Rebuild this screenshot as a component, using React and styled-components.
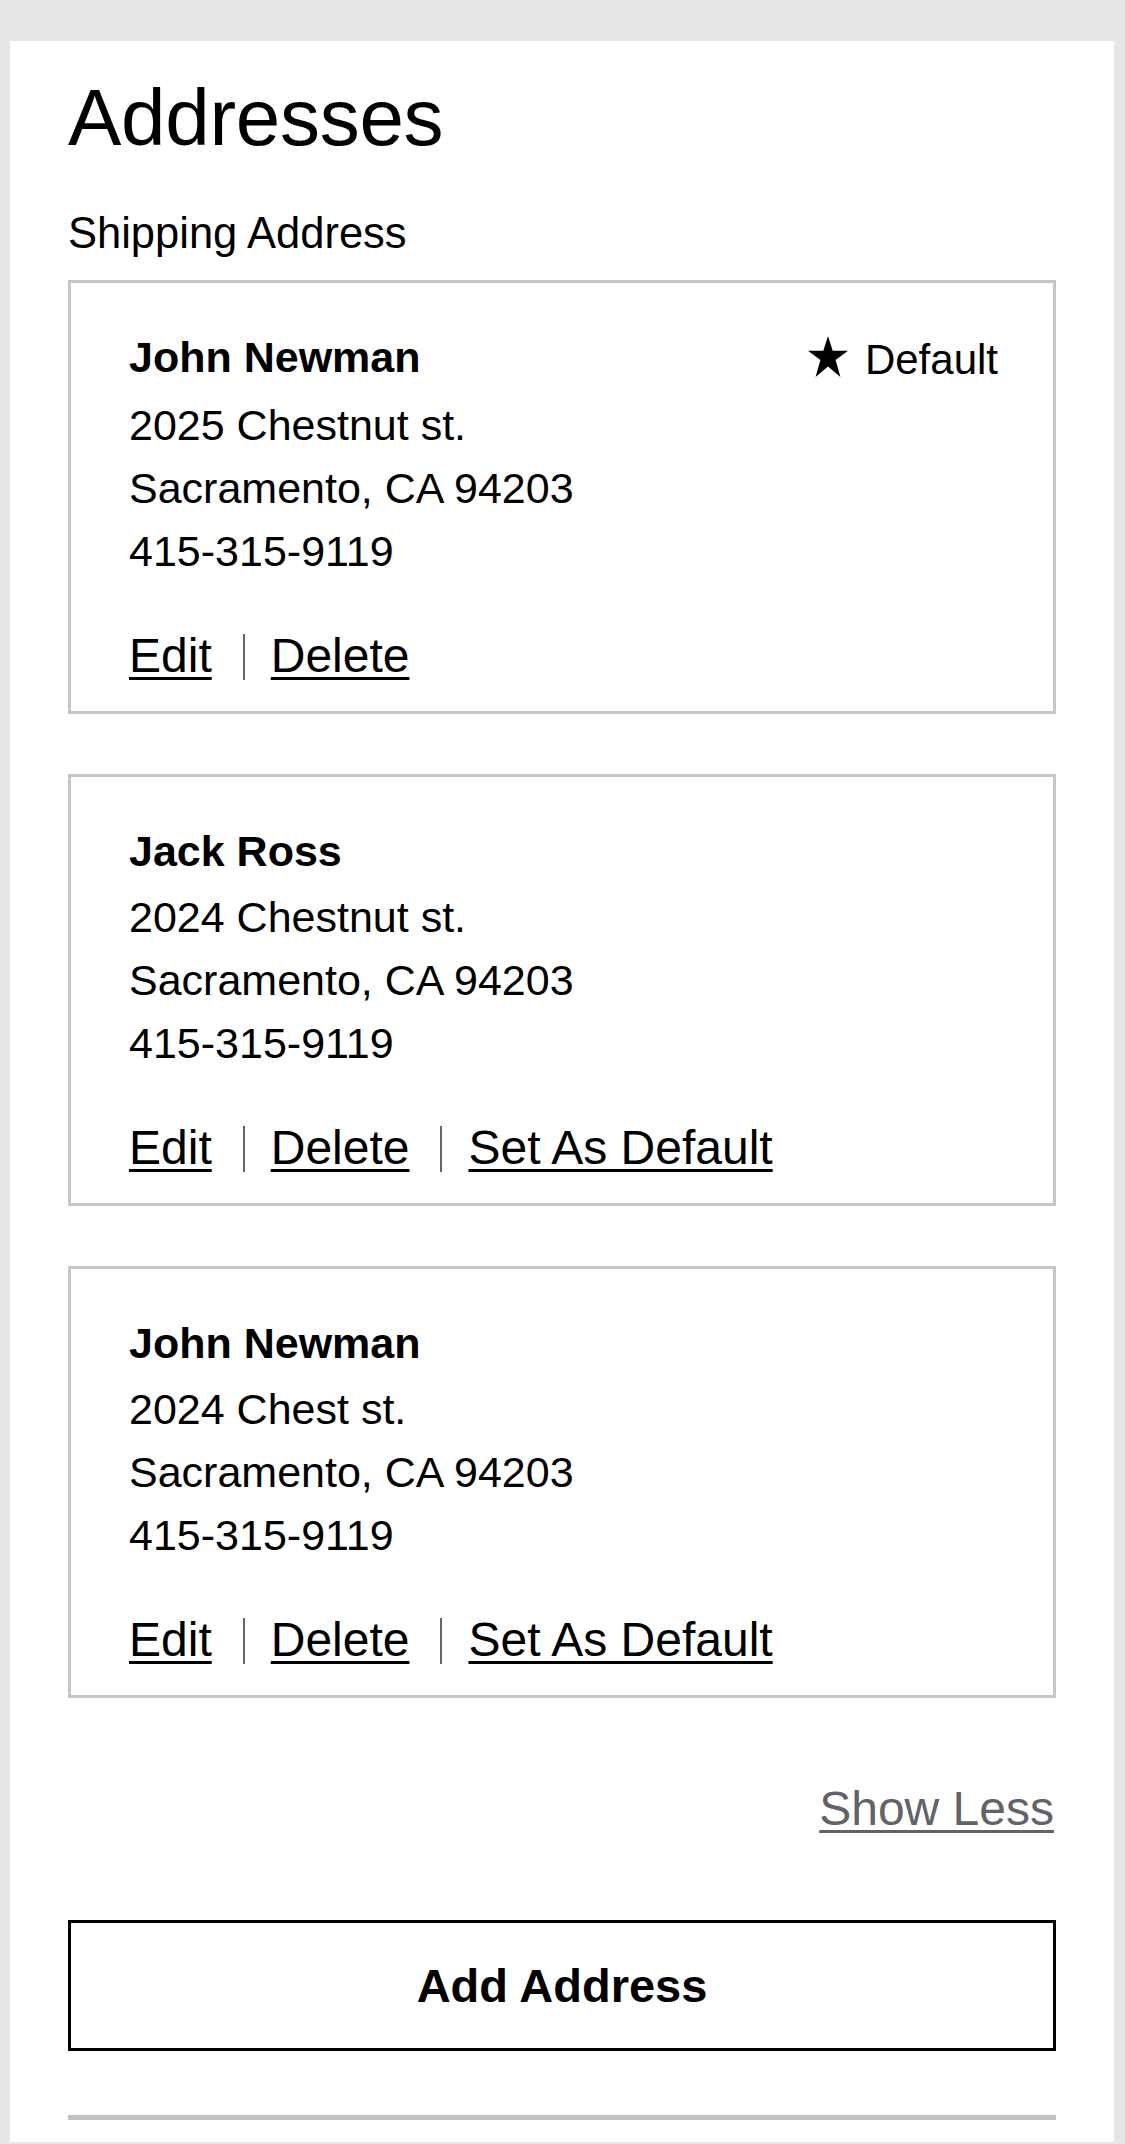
import styled, { createGlobalStyle } from "styled-components";

const GlobalStyle = createGlobalStyle`
  html, body {
    margin: 0;
    padding: 0;
    background: #e6e6e6;
    font-family: "Liberation Sans", Arial, Helvetica, sans-serif;
    color: #000;
  }
`;

const Page = styled.div`
  padding-top: 41px;
  padding-left: 10px;
  height: 2142px;
  box-sizing: border-box;
`;

const Panel = styled.main`
  width: 1104px;
  height: 100%;
  box-sizing: border-box;
  background: #fff;
  padding: 32px 58px 0;
  display: flex;
  flex-direction: column;
`;

const Title = styled.h1`
  margin: 0;
  font-size: 80px;
  line-height: 90px;
  font-weight: 400;
  letter-spacing: -0.3px;
`;

const SectionLabel = styled.h2`
  margin: 45px 0 22px;
  font-size: 43.5px;
  line-height: 50px;
  font-weight: 400;
`;

const CardList = styled.div`
  display: flex;
  flex-direction: column;
  gap: 60px;
`;

const Card = styled.section`
  border: 3px solid #c6c6c6;
  padding: 43px 55px 27px 58px;
`;

const Header = styled.div`
  display: flex;
  justify-content: space-between;
  align-items: flex-start;
  margin-bottom: 3px;
`;

const Line = styled.div`
  font-size: 43px;
  line-height: 63px;
  font-weight: ${(p) => (p.$bold ? 700 : 400)};
`;

const DefaultTag = styled.div`
  display: flex;
  align-items: center;
  gap: 17px;
  font-size: 42px;
  line-height: 63px;
  margin-top: 2px;

  svg {
    width: 40px;
    height: 41px;
    margin-top: -6px;
  }
`;

const Actions = styled.div`
  display: flex;
  align-items: center;
  margin-top: 45px;
  height: 56px;
`;

const ActionLink = styled.a`
  font-size: 48px;
  line-height: 56px;
  color: #000;
  text-decoration: underline;
  text-decoration-thickness: 3px;
  text-underline-offset: 5px;
  cursor: pointer;
`;

const Separator = styled.span`
  width: 2px;
  height: 46px;
  background: #666;
  margin: 2px 26px 0 31px;
`;

const ShowLess = styled.a`
  align-self: flex-end;
  margin: 83px 2px 0 0;
  font-size: 48px;
  line-height: 56px;
  color: #626268;
  text-decoration: underline;
  text-decoration-thickness: 3px;
  text-underline-offset: 5px;
  cursor: pointer;
`;

const AddButton = styled.button`
  margin-top: 83px;
  height: 131px;
  border: 3px solid #000;
  background: #fff;
  font-family: inherit;
  font-size: 47px;
  font-weight: 700;
  color: #000;
  cursor: pointer;
`;

const Rule = styled.hr`
  margin: 64px 0 0;
  border: 0;
  height: 5px;
  background: #c2c2c2;
`;

const Star = () => (
  <svg viewBox="0 0 40 41" aria-hidden="true">
    <polygon
      fill="#000"
      points="20,0 24.7,14.8 40,14.8 27.6,24 32.4,41 20,30.6 7.6,41 12.4,24 0,14.8 15.3,14.8"
    />
  </svg>
);

const addresses = [
  { name: "John Newman", street: "2025 Chestnut st.", isDefault: true },
  { name: "Jack Ross", street: "2024 Chestnut st." },
  { name: "John Newman", street: "2024 Chest st." },
];

function AddressCard({ name, street, isDefault }) {
  return (
    <Card>
      <Header>
        <Line $bold>{name}</Line>
        {isDefault && (
          <DefaultTag>
            <Star />
            Default
          </DefaultTag>
        )}
      </Header>
      <Line>{street}</Line>
      <Line>Sacramento, CA 94203</Line>
      <Line>415-315-9119</Line>
      <Actions>
        <ActionLink>Edit</ActionLink>
        <Separator />
        <ActionLink>Delete</ActionLink>
        {!isDefault && (
          <>
            <Separator />
            <ActionLink>Set As Default</ActionLink>
          </>
        )}
      </Actions>
    </Card>
  );
}

export default function App() {
  return (
    <>
      <GlobalStyle />
      <Page>
        <Panel>
          <Title>Addresses</Title>
          <SectionLabel>Shipping Address</SectionLabel>
          <CardList>
            {addresses.map((a, i) => (
              <AddressCard key={i} {...a} />
            ))}
          </CardList>
          <ShowLess>Show Less</ShowLess>
          <AddButton>Add Address</AddButton>
          <Rule />
        </Panel>
      </Page>
    </>
  );
}
